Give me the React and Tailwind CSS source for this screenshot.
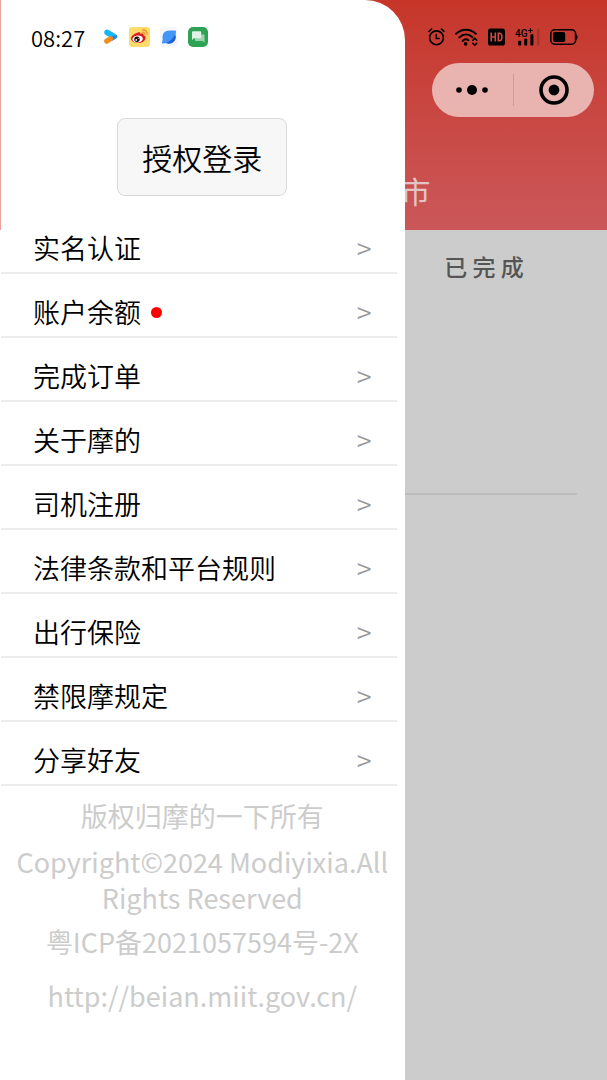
import React from 'react';

const menuItems = [
  { id: 'verify', label: '实名认证' },
  { id: 'balance', label: '账户余额', hasDot: true },
  { id: 'orders', label: '完成订单' },
  { id: 'about', label: '关于摩的' },
  { id: 'driver', label: '司机注册' },
  { id: 'rules', label: '法律条款和平台规则' },
  { id: 'insurance', label: '出行保险' },
  { id: 'limits', label: '禁限摩规定' },
  { id: 'share', label: '分享好友' },
];

const NotificationIcons = () => (
  <div className="flex items-center gap-[10px]">
    {/* Video */}
    <svg className="w-4 h-4" viewBox="0 0 16 16">
      <path d="M2 1.200C3.200.2 4.800.4 6 1.200l7.200 4.300c1.600 1 1.600 2.600.2 3.600L10.600 11 6.800 8 2.600 5.900C.9 5 .9 2.300 2 1.200z" fill="#14b8f6" />
      <path d="M6.800 7.600l6.800-1.200c.9 1 .6 2.100-.4 2.800L9 12z" fill="#2485e8" />
      <path d="M1.800 10.300L6 7.700c1.600-.8 3.300-.2 3.900.9.600 1.200.2 2.400-.9 3.100l-4.200 2.700c-1.200.7-2.600.3-3.300-.9-.6-1.100-.6-2.500.3-3.200z" fill="#f18a1f" />
    </svg>
    {/* Weibo */}
    <svg className="w-[21px] h-5" viewBox="0 0 21 20">
      <rect width="21" height="20" rx="3.5" fill="#fddc6c" />
      <path d="M9 5.6c1.2-.6 2.6-.4 2.3 1.3 1.9-.8 3.7-.5 3.2 1.3 1.5.5 2.3 1.4 2.1 2.900-.4 3-3.900 5-7.600 5-3.900 0-7-1.800-7-4.500 0-2.500 3.400-5 7-6z" fill="#e01b1b" />
      <ellipse cx="8.600" cy="12" rx="5.200" ry="3.500" fill="#fff" transform="rotate(-8 8.600 12)" />
      <circle cx="8" cy="12.200" r="2.700" fill="#111" />
      <circle cx="7.300" cy="12.900" r=".9" fill="#fff" />
      <circle cx="9.200" cy="11.400" r=".5" fill="#fff" />
      <path d="M13.500 2.800c2.900-.4 5 1.900 4.500 4.900M13.600 5.200c1.500-.2 2.400.8 2.200 2.200" stroke="#f29a2e" strokeWidth="1.300" fill="none" strokeLinecap="round" />
    </svg>
    {/* Browser */}
    <svg className="w-[18px] h-5" viewBox="0 0 18 20">
      <rect width="18" height="20" rx="4" fill="#f5f7fb" />
      <circle cx="9" cy="10" r="6.600" fill="#4495f8" />
      <path d="M10 3.400h4.800c1 0 1.400.6 1.200 1.500l-.8 5z" fill="#4495f8" />
      <path d="M15.100 7.400a6.600 6.600 0 0 1-9 8.500c3.800-1.500 7-4.400 9-8.500z" fill="#1f5fdc" />
      <path d="M3 11.500L2 15.200c-.2 1 .4 1.500 1.300 1.300l3-.5z" fill="#4495f8" />
    </svg>
    {/* Messages */}
    <svg className="w-5 h-5" viewBox="0 0 20 20">
      <rect width="20" height="20" rx="5" fill="#2fa354" />
      <path d="M8 7.500h7.500a1 1 0 0 1 1 1v7.300l-2-1.800H8a1 1 0 0 1-1-1V8.500a1 1 0 0 1 1-1z" fill="#9bd5ae" />
      <path d="M5 4.200h7.200a1 1 0 0 1 1 1v5.100a1 1 0 0 1-1 1H6L4 13V5.200a1 1 0 0 1 1-1z" fill="#dff2e5" />
    </svg>
  </div>
);

const SystemIcons = () => (
  <div className="flex items-center gap-[10px]">
    {/* Alarm */}
    <svg className="w-[17px] h-[18px]" viewBox="0 0 17 18" fill="none" stroke="#000" strokeLinecap="round">
      <circle cx="8.500" cy="9.800" r="6.900" strokeWidth="1.600" />
      <path d="M8.200 6.500v4h3" strokeWidth="1.400" />
      <path d="M1 3.300L3.600 1M16 3.300L13.400 1" strokeWidth="1.600" />
    </svg>
    {/* Wifi */}
    <svg className="w-[23px] h-[18px]" viewBox="0 0 23 18" fill="none" stroke="#000" strokeLinecap="round">
      <path d="M1.200 5.700c5.700-5.400 13.900-5.400 19.600 0" strokeWidth="2" />
      <path d="M4.300 9.400c4.100-3.900 9.300-3.900 13.400 0" strokeWidth="2" />
      <path d="M7.600 12.900c2-1.900 4.200-2 5.800-.6" strokeWidth="2" />
      <circle cx="10.600" cy="15.900" r="1.800" fill="#000" stroke="none" />
      <path d="M17.800 12.300l2-1.900 2 1.900M17.800 15.300l2 1.900 2-1.900" strokeWidth="1.500" />
    </svg>
    {/* HD */}
    <svg className="w-[17px] h-[18px]" viewBox="0 0 17 18" fill="none" stroke="#cf4a3f" strokeWidth="1.600">
      <rect y=".5" width="17" height="17" rx="2.600" fill="#000" stroke="none" />
      <path d="M3.200 4.500v9M7.300 4.500v9M3.200 9h4.100M10.300 5.200v7.600h1.200c1.700 0 2.400-1.200 2.400-3.800s-.7-3.800-2.400-3.800z" />
    </svg>
    {/* Mobile signal */}
    <svg className="w-[25px] h-[18px]" viewBox="0 0 25 18">
      <text x="0" y="8.500" fontFamily="Roboto, sans-serif" fontSize="10" fontWeight="500">4G</text>
      <path d="M15.400 .2v4.600M13.100 2.500h4.600" stroke="#000" strokeWidth="1.200" />
      <rect x="3.200" y="12.800" width="3" height="4.700" rx=".8" />
      <rect x="9.200" y="10.800" width="3" height="6.700" rx=".8" />
      <rect x="15.400" y="6.300" width="3" height="11.200" rx=".8" />
      <rect x="22" y=".5" width="2.400" height="17" rx=".8" fill="#a5322b" />
    </svg>
    {/* Battery */}
    <svg className="w-[28px] h-[18px]" viewBox="0 0 28 18">
      <rect x=".8" y="1.800" width="24.800" height="14.400" rx="4" fill="none" stroke="#000" strokeWidth="1.600" />
      <rect x="3" y="4" width="12.200" height="10" rx="1.800" />
      <path d="M26.200 6.200c1.800.6 1.800 5 0 5.600z" />
    </svg>
  </div>
);

const StatusBar = () => (
  <div className="absolute inset-x-0 top-0 z-20 flex h-[74px] items-center justify-between pl-[31px] pr-[29px]">
    <div className="flex items-center gap-[18px]">
      <span className="text-[22px] font-[350] leading-8 text-black">08:27</span>
      <NotificationIcons />
    </div>
    <SystemIcons />
  </div>
);

const HomePage = () => (
  <div className="min-h-screen bg-[#cccccc]">
    <header className="flex h-[230px] flex-col bg-linear-to-b from-[#c63528] to-[#cb5759] pt-[63px]">
      <div className="mr-[13px] flex h-[54px] w-[162px] shrink-0 items-center self-end rounded-full bg-[#e9b4b0]">
        <button type="button" aria-label="更多" className="flex flex-1 justify-center">
          <svg className="w-8 h-[10px]" viewBox="0 0 32 10">
            <circle cx="3" cy="5" r="2.800" />
            <circle cx="16" cy="5" r="5" />
            <circle cx="29" cy="5" r="2.800" />
          </svg>
        </button>
        <span className="h-8 w-px bg-[#cf9a97]" />
        <button type="button" aria-label="关闭" className="flex flex-1 justify-center">
          <svg className="w-[30px] h-[30px]" viewBox="0 0 30 30">
            <circle cx="15" cy="15" r="13" fill="none" stroke="#000" strokeWidth="3.600" />
            <circle cx="15" cy="15" r="5.400" />
          </svg>
        </button>
      </div>
      <h1 className="mt-[53px] pl-[66%] text-[30px] leading-10 text-[#e3c4c6]">市</h1>
    </header>

    <section className="mr-[30px] h-[265px] border-b-2 border-[#bdbdbd] pt-5">
      <h2 className="pl-[77%] text-[23px] font-medium leading-8 text-[#555555]">已 完 成</h2>
    </section>
  </div>
);

const Drawer = () => (
  <aside className="absolute inset-y-0 left-0 z-10 flex w-2/3 flex-col overflow-hidden rounded-tr-[40px] bg-white pt-[118px]">
    <div className="absolute left-0 top-0 h-[230px] w-px bg-[#e8a3a0]" />

    <button
      type="button"
      className="h-[78px] self-center rounded-lg border border-[#d8d8d8] bg-[#f7f7f7] px-6 text-[30px] font-[350] leading-10 text-black"
    >
      授权登录
    </button>

    <ul className="ml-px mr-2 mt-[14px]">
      {menuItems.map((item) => (
        <li key={item.id} className="h-16 border-b-2 border-[#ebebeb]">
          <a href={`#${item.id}`} className="flex h-full items-center pl-8 pr-[25px] pt-[14px] text-[27px] font-[350] leading-9 text-black">
            <span>{item.label}</span>
            {item.hasDot && <span className="ml-[10px] h-[11px] w-[11px] rounded-full bg-[#ff0000]" />}
            <span className="ml-auto text-[#999999]">&gt;</span>
          </a>
        </li>
      ))}
    </ul>

    <footer className="mt-3 px-2 text-center text-[27px] leading-9 text-[#cccccc]">
      <p>版权归摩的一下所有</p>
      <p className="mt-[10px]">Copyright©2024 Modiyixia.All Rights Reserved</p>
      <p className="mt-2">粤ICP备2021057594号-2X</p>
      <a href="http://beian.miit.gov.cn/" className="mt-[18px] block">http://beian.miit.gov.cn/</a>
    </footer>
  </aside>
);

const App = () => (
  <div className="relative overflow-hidden font-['Noto_Sans_CJK_SC',sans-serif]">
    <HomePage />
    <Drawer />
    <StatusBar />
  </div>
);

export default App;
